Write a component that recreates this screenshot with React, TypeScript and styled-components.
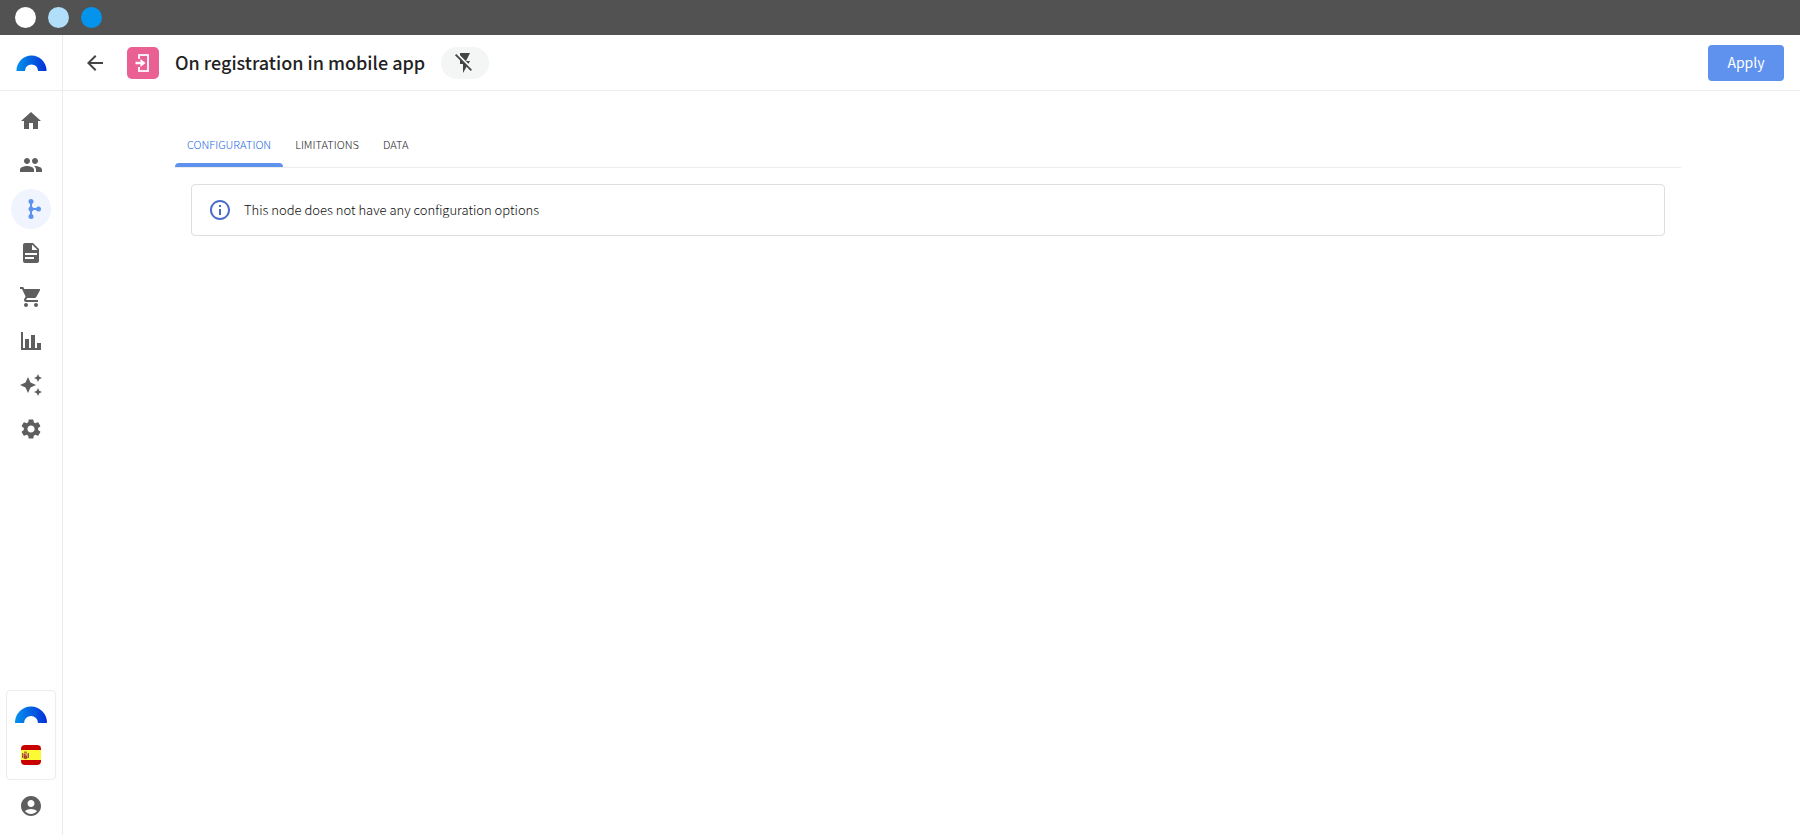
import React, { useId, useState } from 'react';
import styled, { createGlobalStyle } from 'styled-components';
import {
  MdAccountCircle,
  MdArrowBack,
  MdAutoAwesome,
  MdFlashOff,
  MdHome,
  MdInfoOutline,
  MdPeople,
  MdSettings,
  MdShoppingCart,
} from 'react-icons/md';

const GlobalStyle = createGlobalStyle`
  *, *::before, *::after { box-sizing: border-box; }
  body {
    margin: 0;
    background: #fff;
    color: #222;
    font-family: 'Source Sans Pro', 'Noto Sans CJK SC', 'Noto Sans', sans-serif;
  }
  button { font-family: inherit; border: 0; padding: 0; cursor: pointer; }
`;

const Page = styled.div`
  display: flex;
  flex-direction: column;
  min-height: 100vh;
`;

const WindowBar = styled.div`
  display: flex;
  align-items: center;
  gap: 12px;
  height: 35px;
  padding-left: 15px;
  background: #525252;
`;

const WindowDot = styled.span<{ $color: string }>`
  width: 21px;
  height: 21px;
  border-radius: 50%;
  background: ${(p) => p.$color};
`;

const Shell = styled.div`
  display: flex;
  flex: 1;
`;

const Sidebar = styled.aside`
  display: flex;
  flex-direction: column;
  flex: none;
  width: 63px;
  border-right: 1px solid #ececec;
`;

const Brand = styled.a`
  display: flex;
  align-items: center;
  justify-content: center;
  height: 56px;
  border-bottom: 1px solid #ececec;
`;

const Nav = styled.nav`
  display: flex;
  flex-direction: column;
  align-items: center;
  gap: 4px;
  padding: 10px 0;
`;

const NavLink = styled.a<{ $active?: boolean }>`
  display: flex;
  align-items: center;
  justify-content: center;
  width: 40px;
  height: 40px;
  border-radius: 50%;
  color: ${(p) => (p.$active ? '#5e92ee' : '#5e5e5e')};
  background: ${(p) => (p.$active ? '#eff4fe' : 'transparent')};
`;

const SidebarFooter = styled.div`
  display: flex;
  flex-direction: column;
  align-items: center;
  gap: 6px;
  margin-top: auto;
  padding-bottom: 9px;
`;

const Workspace = styled.button`
  display: flex;
  flex-direction: column;
  align-items: center;
  gap: 22px;
  width: 50px;
  padding: 15px 0 14px;
  border: 1px solid #ececec;
  border-radius: 4px;
  background: #fff;
`;

const Main = styled.main`
  flex: 1;
  min-width: 0;
`;

const Header = styled.header`
  display: flex;
  align-items: center;
  gap: 16px;
  height: 56px;
  padding: 0 16px 0 20px;
  border-bottom: 1px solid #ececec;
`;

const BackButton = styled.button`
  display: flex;
  margin-right: 4px;
  background: none;
  color: #444;
`;

const NodeBadge = styled.span`
  display: flex;
  width: 32px;
  height: 32px;
  border-radius: 5px;
  background: #eb6093;
`;

const Title = styled.h1`
  margin: 0;
  padding-bottom: 2px;
  font-size: 18px;
  line-height: 24px;
  font-weight: 500;
  white-space: nowrap;
`;

const TriggerButton = styled.button`
  display: flex;
  align-items: center;
  justify-content: center;
  width: 48px;
  height: 32px;
  border-radius: 16px;
  background: #f4f6f6;
  color: #444;
`;

const ApplyButton = styled.button`
  width: 76px;
  height: 36px;
  margin-left: auto;
  padding-bottom: 2px;
  border-radius: 4px;
  background: #5e92ee;
  color: #fff;
  font-size: 14px;
  line-height: 20px;
`;

const Content = styled.div`
  padding: 32px 119px 0 112px;
`;

const Tabs = styled.div`
  display: flex;
  height: 45px;
  border-bottom: 1px solid #ececec;
`;

const Tab = styled.button<{ $active: boolean }>`
  display: flex;
  align-items: center;
  position: relative;
  padding: 0 12px 2px;
  background: none;
  color: ${(p) => (p.$active ? '#2467e6' : '#192127')};
  font-size: 11px;
  line-height: 16px;
  font-weight: 300;

  &::after {
    content: '';
    display: ${(p) => (p.$active ? 'block' : 'none')};
    position: absolute;
    left: 0;
    right: 0;
    bottom: 0;
    height: 4px;
    border-radius: 4px 4px 0 0;
    background: #5e92ee;
  }
`;

const Panel = styled.section`
  padding: 16px;
`;

const Notice = styled.div`
  display: flex;
  align-items: center;
  gap: 12px;
  height: 52px;
  padding: 0 16px;
  border: 1px solid #dedede;
  border-radius: 4px;
`;

const NoticeText = styled.p`
  margin: 0;
  color: #0c0c0c;
  font-size: 13px;
  line-height: 20px;
  font-weight: 300;
`;

function Logo({ width = 32, height = 17 }: { width?: number; height?: number }) {
  const id = useId();
  return (
    <svg width={width} height={height} viewBox="0 0 32 17" aria-hidden="true">
      <defs>
        <linearGradient id={id} x1="0" y1="0" x2="1" y2="0">
          <stop offset="0" stopColor="#0592ec" />
          <stop offset="1" stopColor="#0330d8" />
        </linearGradient>
      </defs>
      <path d="M0 17a16 16.5 0 0 1 32 0h-9a7 7 0 0 0-14 0z" fill={`url(#${id})`} />
    </svg>
  );
}

function JourneyIcon() {
  return (
    <svg width="24" height="24" viewBox="0 0 24 24" fill="currentColor" aria-hidden="true">
      <circle cx="12" cy="4.5" r="2.5" />
      <circle cx="12" cy="12" r="2.5" />
      <circle cx="12" cy="19.5" r="2.5" />
      <circle cx="19.5" cy="12" r="2.5" />
      <path d="M11 4.5h2v15h-2zM12 11h7.500v2H12z" />
    </svg>
  );
}

function DocumentIcon() {
  return (
    <svg width="24" height="24" viewBox="0 0 24 24" fill="currentColor" aria-hidden="true">
      <path
        fillRule="evenodd"
        d="M14 2H6a2 2 0 0 0-2 2v16a2 2 0 0 0 2 2h12a2 2 0 0 0 2-2V8zM13 9V3.500L18.500 9zM6 12h12v2H6zM6 16h9v2H6z"
      />
    </svg>
  );
}

function ChartIcon() {
  return (
    <svg width="24" height="24" viewBox="0 0 24 24" fill="currentColor" aria-hidden="true">
      <path d="M2 3h2v16h2V10h4v9h2V6h4v13h2v-5h4v7H2z" />
    </svg>
  );
}

function EnterIcon() {
  return (
    <svg width="32" height="32" viewBox="0 0 32 32" aria-hidden="true">
      <path d="M12 12V8h9v16h-9v-4" fill="none" stroke="#fbeef3" strokeWidth="2" />
      <path d="M8.500 14.800h5V12l5 4-5 4v-2.800h-5z" fill="#fff" />
    </svg>
  );
}

function SpainFlag() {
  const id = useId();
  return (
    <svg width="20" height="20" viewBox="0 0 20 20" role="img" aria-label="Spain">
      <clipPath id={id}>
        <rect width="20" height="20" rx="4" />
      </clipPath>
      <g clipPath={`url(#${id})`}>
        <path fill="#c80000" d="M0 0h20v20H0z" />
        <path fill="#fcf935" d="M0 5h20v10H0z" />
        <path fill="#8f5a50" d="M1 8h1v5H1zM7 8h1v5H7z" />
        <path fill="#b0452c" d="M2.500 8.500h4v4a2 1.500 0 0 1-4 0z" />
        <path fill="#b5813a" d="M3 6.500h3v1.500H3z" />
        <path fill="#d9b4a5" d="M4.500 9h1.500v1.500H4.500z" />
      </g>
    </svg>
  );
}

const NAV_ITEMS = [
  { label: 'Home', icon: <MdHome size={24} /> },
  { label: 'Contacts', icon: <MdPeople size={24} /> },
  { label: 'Journeys', icon: <JourneyIcon />, active: true },
  { label: 'Content', icon: <DocumentIcon /> },
  { label: 'Products', icon: <MdShoppingCart size={24} /> },
  { label: 'Reports', icon: <ChartIcon /> },
  { label: 'Assistant', icon: <MdAutoAwesome size={24} /> },
  { label: 'Settings', icon: <MdSettings size={24} /> },
];

const TABS = ['CONFIGURATION', 'LIMITATIONS', 'DATA'];

export default function App() {
  const [tab, setTab] = useState(TABS[0]);
  return (
    <Page>
      <GlobalStyle />
      <WindowBar>
        <WindowDot $color="#ffffff" />
        <WindowDot $color="#b1def8" />
        <WindowDot $color="#0594ec" />
      </WindowBar>
      <Shell>
        <Sidebar>
          <Brand href="#" aria-label="Dashboard">
            <Logo width={31} height={16} />
          </Brand>
          <Nav>
            {NAV_ITEMS.map((item) => (
              <NavLink key={item.label} href="#" aria-label={item.label} $active={item.active}>
                {item.icon}
              </NavLink>
            ))}
          </Nav>
          <SidebarFooter>
            <Workspace aria-label="Switch workspace">
              <Logo />
              <SpainFlag />
            </Workspace>
            <NavLink href="#" aria-label="Account">
              <MdAccountCircle size={24} />
            </NavLink>
          </SidebarFooter>
        </Sidebar>
        <Main>
          <Header>
            <BackButton aria-label="Back">
              <MdArrowBack size={24} />
            </BackButton>
            <NodeBadge>
              <EnterIcon />
            </NodeBadge>
            <Title>On registration in mobile app</Title>
            <TriggerButton aria-label="Trigger disabled">
              <MdFlashOff size={24} />
            </TriggerButton>
            <ApplyButton>Apply</ApplyButton>
          </Header>
          <Content>
            <Tabs role="tablist">
              {TABS.map((name) => (
                <Tab
                  key={name}
                  role="tab"
                  aria-selected={tab === name}
                  $active={tab === name}
                  onClick={() => setTab(name)}
                >
                  {name}
                </Tab>
              ))}
            </Tabs>
            <Panel role="tabpanel">
              <Notice>
                <MdInfoOutline size={24} color="#4a6ccb" />
                <NoticeText>This node does not have any configuration options</NoticeText>
              </Notice>
            </Panel>
          </Content>
        </Main>
      </Shell>
    </Page>
  );
}
